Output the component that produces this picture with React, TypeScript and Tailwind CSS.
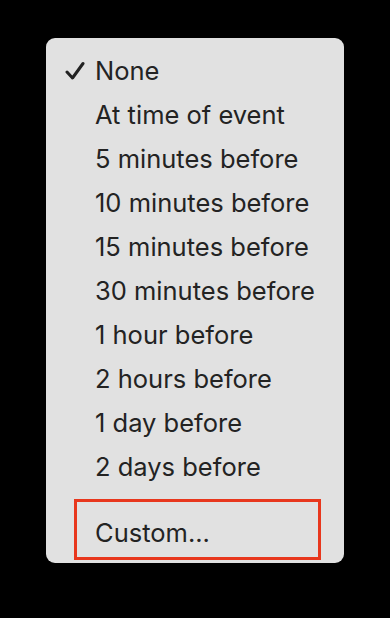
const items = [
  'None',
  'At time of event',
  '5 minutes before',
  '10 minutes before',
  '15 minutes before',
  '30 minutes before',
  '1 hour before',
  '2 hours before',
  '1 day before',
  '2 days before',
]

function Check() {
  return (
    <svg className="w-[20px] h-[20px]" viewBox="0 0 20 20" fill="none">
      <path d="M2 11l5.5 6L18 2.5" stroke="#222" strokeWidth={3} strokeLinecap="round" strokeLinejoin="round" />
    </svg>
  )
}

export default function App() {
  return (
    <div className="w-[390px] h-[618px] bg-black pt-[38px] pl-[46px]" style={{ fontFamily: 'Inter, "Noto Sans", sans-serif' }}>
      <div className="w-[298px] h-[525px] bg-[#e1e1e1] rounded-[9px] pt-[11px] text-[#232323] text-[25.5px]">
        {items.map((label, i) => (
          <div key={label} className="h-[44px] flex items-center pl-[19px]">
            <span className="w-[30px] flex items-center">{i === 0 && <Check />}</span>
            <span>{label}</span>
          </div>
        ))}
        <div className="mt-[10px] ml-[28px] w-[247px] h-[61px] border-[3px] border-[#e8371d] flex items-center pl-[18px] pt-[7px]">
          Custom...
        </div>
      </div>
    </div>
  )
}
